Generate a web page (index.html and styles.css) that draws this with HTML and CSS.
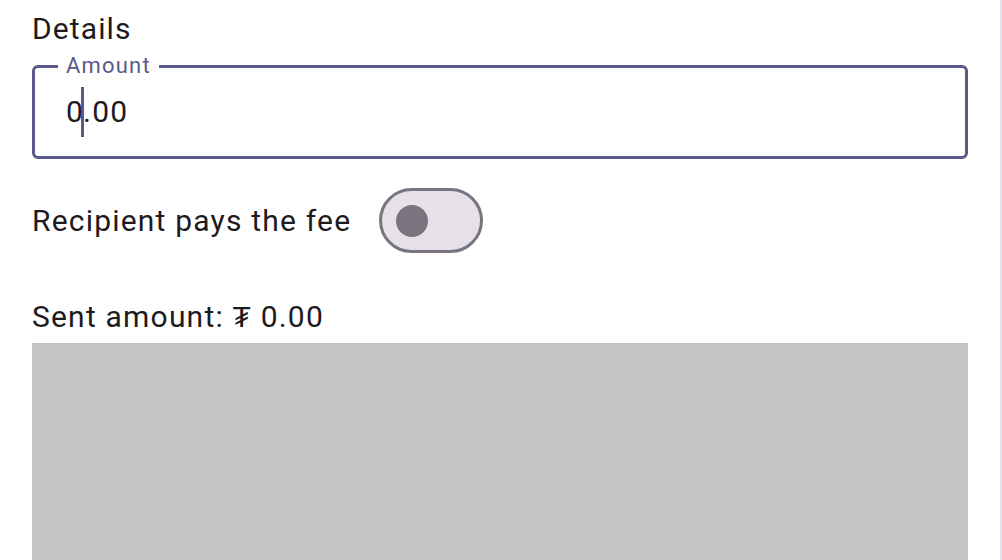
FILE: index.html
```html
<!DOCTYPE html>
<html lang="en">
<head>
<meta charset="utf-8">
<title>Details</title>
<link rel="stylesheet" href="styles.css">
</head>
<body>
<div class="page">
  <main class="content">
    <h2 class="section-title">Details</h2>
    <fieldset class="field">
      <legend class="field-label">Amount</legend>
      <div class="field-value"><span>0</span><span class="caret"></span><span>.00</span></div>
    </fieldset>
    <div class="toggle-row">
      <span class="toggle-label">Recipient pays the fee</span>
      <span class="switch"><span class="thumb"></span></span>
    </div>
    <p class="sent">Sent amount: ₮ 0.00</p>
    <div class="placeholder"></div>
  </main>
  <div class="divider"></div>
</div>
</body>
</html>
```
FILE: styles.css
```css
* { box-sizing: border-box; }
html, body { margin: 0; padding: 0; background: #ffffff; }
body {
  font-family: Roboto, "Liberation Sans", sans-serif;
  color: #1d1b20;
  height: 560px;
  overflow: hidden;
}
.page {
  display: flex;
  height: 560px;
}
.content {
  flex: 0 0 auto;
  width: 968px;
  padding-left: 32px;
  display: flex;
  flex-direction: column;
}
.section-title {
  margin: 0;
  font-weight: 400;
  font-size: 30px;
  line-height: 34px;
  letter-spacing: 1.1px;
  padding-top: 12px;
  height: 53px;
}
.field {
  margin: 0;
  border: 3px solid #5a5a8c;
  border-radius: 6px;
  height: 106px;
  padding: 0 0 0 31px;
  min-width: 0;
}
.field-label {
  color: #5a5a8c;
  font-size: 22px;
  line-height: 26px;
  letter-spacing: 1.2px;
  padding: 0 8px;
  margin-left: -8px;
}
.field-value {
  display: flex;
  align-items: center;
  font-size: 30px;
  line-height: 34px;
  letter-spacing: 1.2px;
  margin-top: 8px;
  height: 50px;
}
.caret {
  display: inline-block;
  width: 3px;
  height: 50px;
  background: #5a5a8c;
  margin: 0 -1px 0 -3px;
}
.toggle-row {
  display: flex;
  align-items: center;
  gap: 28px;
  margin-top: 29px;
  height: 65px;
}
.toggle-label {
  font-size: 30px;
  letter-spacing: 1.2px;
}
.switch {
  width: 104px;
  height: 65px;
  border: 3px solid #79747e;
  border-radius: 33px;
  background: #e6e0e9;
  display: flex;
  align-items: center;
  padding-left: 14px;
}
.thumb {
  width: 32px;
  height: 32px;
  border-radius: 50%;
  background: #79747e;
}
.sent {
  margin: 0;
  font-size: 30px;
  line-height: 34px;
  letter-spacing: 1.2px;
  padding-top: 47px;
  height: 90px;
}
.placeholder {
  flex: 1 1 auto;
  background: #c4c4c4;
}
.divider {
  margin-left: 32px;
  width: 2px;
  background: #e5e1e8;
}
```
